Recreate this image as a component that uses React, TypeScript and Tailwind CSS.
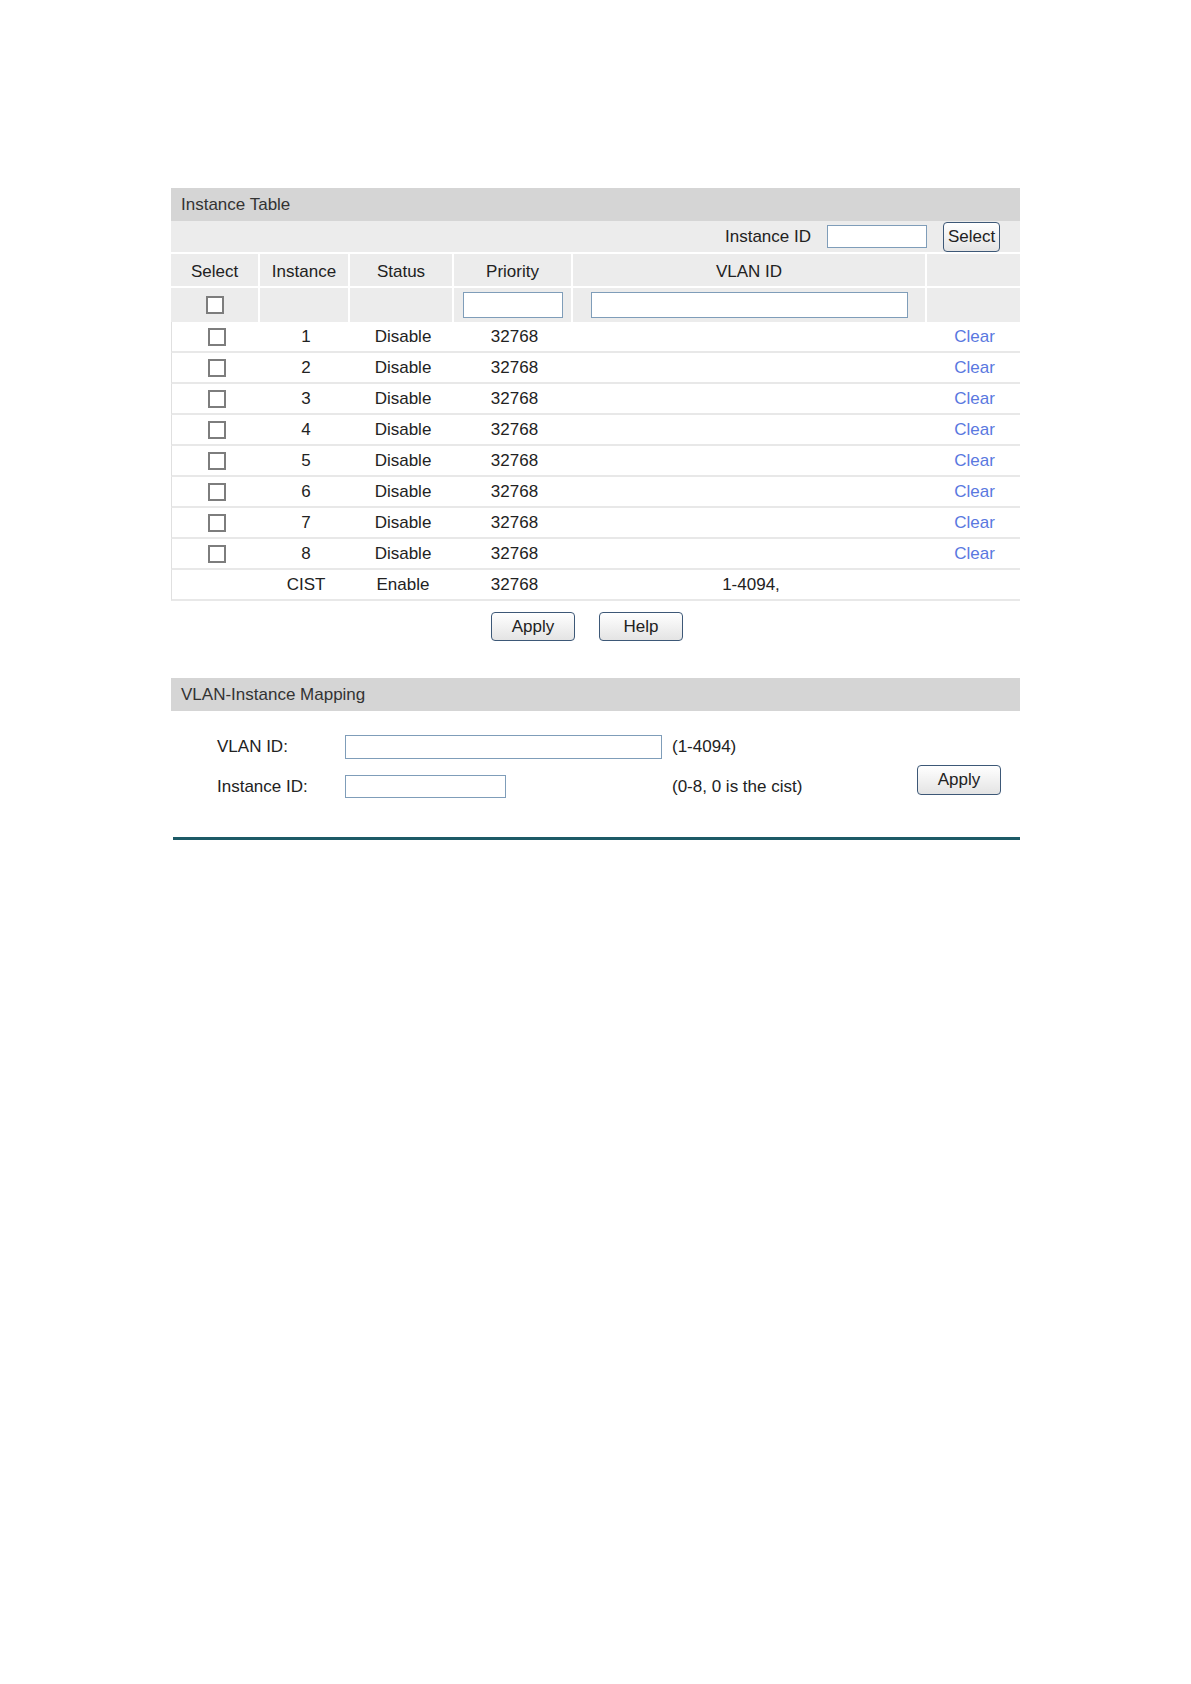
import React from "react";

const font = { fontFamily: '"Liberation Sans", Arial, sans-serif' };

function Box() {
  return <div className="w-[18px] h-[18px] border-2 border-[#7d7d7d] bg-white" />;
}

function Btn({ label, className = "" }: { label: string; className?: string }) {
  return (
    <button
      className={`flex items-center justify-center border border-[#3d5877] rounded-[4px] bg-gradient-to-b from-white to-[#e4e4e4] text-[17px] text-[#222] ${className}`}
    >
      {label}
    </button>
  );
}

const cols = "grid grid-cols-[89px_90px_104px_119px_354px_93px]";

export default function App() {
  const rows = [1, 2, 3, 4, 5, 6, 7, 8];
  return (
    <div className="min-h-[1684px] bg-white pt-[188px] text-[17px] text-[#222]" style={font}>
      <div className="ml-[171px] w-[849px]">
        {/* Instance Table */}
        <div className="h-[33px] bg-[#d5d5d5] flex items-center pl-[10px] text-[#333]">Instance Table</div>
        <div className="h-[33px] bg-[#ececec] flex items-center justify-end pr-[20px] border-b-2 border-white">
          <span>Instance ID</span>
          <div className="ml-[16px] w-[100px] h-[23px] bg-white border border-[#7f9db9]" />
          <Btn label="Select" className="ml-[16px] w-[57px] h-[30px] px-0" />
        </div>
        <div className={`${cols} h-[34px] bg-[#ececec] border-b-2 border-white`}>
          {["Select", "Instance", "Status", "Priority", "VLAN ID", ""].map((h, i) => (
            <div key={i} className={`flex items-center justify-center pt-[3px] ${i < 5 ? "border-r-2 border-white" : ""}`}>
              {h}
            </div>
          ))}
        </div>
        <div className={`${cols} h-[34px] bg-[#ececec]`}>
          <div className="flex items-center justify-center border-r-2 border-white"><Box /></div>
          <div className="border-r-2 border-white" />
          <div className="border-r-2 border-white" />
          <div className="flex items-center justify-center border-r-2 border-white">
            <div className="w-[100px] h-[26px] bg-white border border-[#7f9db9]" />
          </div>
          <div className="flex items-center pl-[18px] border-r-2 border-white">
            <div className="w-[317px] h-[26px] bg-white border border-[#7f9db9]" />
          </div>
          <div />
        </div>
        {rows.map((n) => (
          <div key={n} className={`${cols} h-[31px] bg-white border-l border-[#e0e0e0] border-b-2 border-b-[#e8e8e8]`}>
            <div className="flex items-center justify-center"><Box /></div>
            <div className="flex items-center justify-center">{n}</div>
            <div className="flex items-center justify-center">Disable</div>
            <div className="flex items-center justify-center">32768</div>
            <div />
            <div className="flex items-center justify-center text-[#5a78e0]">Clear</div>
          </div>
        ))}
        <div className={`${cols} h-[31px] bg-white border-l border-[#e0e0e0] border-b-2 border-b-[#e8e8e8]`}>
          <div />
          <div className="flex items-center justify-center">CIST</div>
          <div className="flex items-center justify-center">Enable</div>
          <div className="flex items-center justify-center">32768</div>
          <div className="flex items-center justify-center">1-4094,</div>
          <div />
        </div>
        <div className="flex pl-[320px] gap-[24px] mt-[11px]">
          <Btn label="Apply" className="w-[84px] h-[29px]" />
          <Btn label="Help" className="w-[84px] h-[29px]" />
        </div>

        {/* VLAN-Instance Mapping */}
        <div className="mt-[37px] h-[33px] bg-[#d5d5d5] flex items-center pl-[10px] text-[#333]">VLAN-Instance Mapping</div>
        <div className="flex pt-[23px] pl-[46px]">
          <div className="grid grid-cols-[128px_327px_245px] gap-y-[14px] items-center">
            <span>VLAN ID:</span>
            <div className="w-[317px] h-[24px] bg-white border border-[#7f9db9]" />
            <span>(1-4094)</span>
            <span>Instance ID:</span>
            <div className="w-[161px] h-[23px] bg-white border border-[#7f9db9]" />
            <span>(0-8, 0 is the cist)</span>
          </div>
          <Btn label="Apply" className="mt-[31px] w-[84px] h-[30px]" />
        </div>
        <div className="mt-[38px] ml-[2px] h-[3px] bg-[#1d5a66]" />
      </div>
    </div>
  );
}
